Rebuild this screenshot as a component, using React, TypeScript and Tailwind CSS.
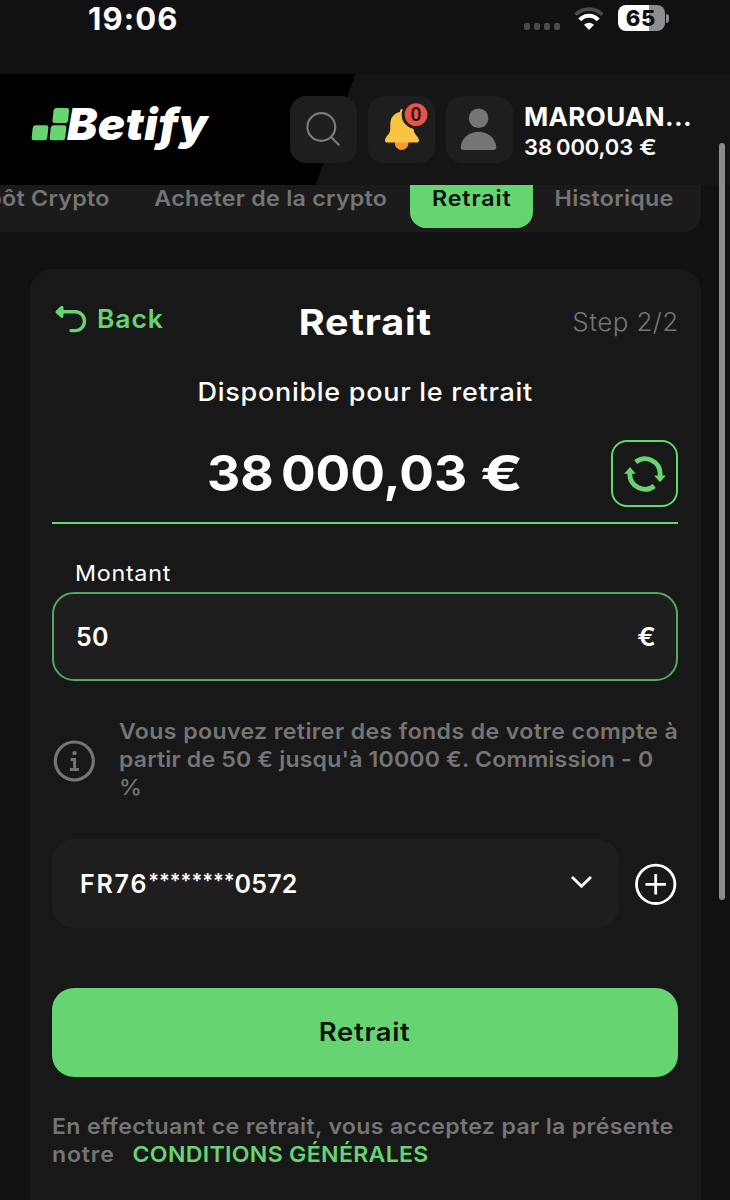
import React, { useState } from 'react';

const tabs = [
    { label: 'Dépôt Crypto', width: 'w-[195px]' },
    { label: 'Acheter de la crypto', width: 'w-[279px]' },
    { label: 'Retrait', width: 'w-[123px]' },
    { label: 'Historique', width: 'w-[162px]' },
];

function StatusBar() {
    return (
        <div className="h-[74px] flex items-start justify-between pl-[88px] pr-[61px]">
            <span className="text-[31px] font-bold leading-[38px] tracking-[1.1px]">19:06</span>
            <div className="flex items-start pt-[5px]">
                <div className="flex gap-[3.5px] mt-[18px] mr-[14px]">
                    {[0, 1, 2, 3].map((i) => (
                        <span key={i} className="w-[6.5px] h-[7px] rounded-[2px] bg-[#4a4a4c]" />
                    ))}
                </div>
                <svg className="mt-[1px] mr-[14px]" width="30" height="25" viewBox="0 0 30 25" fill="none">
                    <path d="M1.6 8.6A19 19 0 0 1 28.4 8.6" stroke="#4a4a4c" strokeWidth="3.8" />
                    <path d="M5.8 13.8A12.5 12.5 0 0 1 24.2 13.8" stroke="#fff" strokeWidth="4.2" />
                    <path d="M10 18.7Q15 14.6 20 18.7L15 24z" fill="#fff" />
                </svg>
                <div className="flex items-center gap-[1px]">
                    <div className="w-[47px] h-[26px] rounded-[8px] flex items-center justify-center bg-linear-to-r from-white from-66% to-[#8e8e90] to-66%">
                        <span className="text-[22px] font-extrabold leading-none tracking-[0.8px] text-[#111113] -ml-[1px]">65</span>
                    </div>
                    <span className="w-[3px] h-[9px] rounded-r-full bg-[#8e8e90]" />
                </div>
            </div>
        </div>
    );
}

function Logo() {
    return (
        <div className="flex items-start pt-[1px]">
            <svg className="mt-[11px]" width="39" height="33" viewBox="0 0 39 33" fill="#66d570">
                <rect x="21.8" y="0" width="15.6" height="15" rx="2.5" transform="translate(1 0) skewX(-6)" />
                <rect x="2.8" y="17.3" width="15.6" height="15" rx="2.5" transform="translate(1 0) skewX(-6)" />
                <rect x="20.8" y="17.3" width="15.6" height="15" rx="2.5" transform="translate(1 0) skewX(-6)" />
            </svg>
            <span className="text-[44px] font-black italic leading-[55px] tracking-[0.5px] -ml-[3px] origin-left scale-x-103">Betify</span>
        </div>
    );
}

function Header() {
    return (
        <header className="relative h-[111px] bg-[#151515]">
            <div className="absolute inset-0 bg-black [clip-path:polygon(0_0,355.5px_0,315.5px_100%,0_100%)]" />
            <div className="relative flex items-start justify-between pt-[22px] pl-[31px] pr-[37px]">
                <Logo />
                <div className="flex items-start gap-[11px]">
                    <button className="w-[67px] h-[67px] rounded-2xl bg-[#1e1e1e]">
                        <svg width="67" height="67" viewBox="0 0 67 67" fill="none" stroke="#7a7a7a" strokeWidth="2.2">
                            <circle cx="31.3" cy="31" r="13.9" />
                            <path d="M41 41l8.3 8.3" />
                        </svg>
                    </button>
                    <button className="relative w-[67px] h-[67px] rounded-2xl bg-[#1e1e1e]">
                        <svg width="67" height="67" viewBox="0 0 67 67">
                            <circle cx="33.6" cy="47.2" r="6.8" fill="#f39b30" />
                            <path
                                d="M34 13c1.2 0 1.6 1 1.6 3C42 17 45.5 22 45.5 28v5c0 5 5.5 8 5.5 11.2 0 1.6-.8 2.3-2.3 2.3H19.3c-1.5 0-2.3-.7-2.3-2.3C17 41 22.3 38 22.3 33v-5c0-6 3.5-11 9.7-12 0-2 .8-3 2-3z"
                                fill="#f8c441"
                            />
                            <circle cx="48" cy="18.7" r="14.3" fill="#1e1e1e" />
                            <circle cx="48" cy="18.7" r="11.4" fill="#e85345" />
                        </svg>
                        <span className="absolute left-[37px] top-[7px] w-[22px] text-center font-['Open_Sans'] text-[19px] leading-[23px] font-semibold text-[#151515]">0</span>
                    </button>
                    <button className="w-[67px] h-[67px] rounded-2xl bg-[#1e1e1e]">
                        <svg width="67" height="67" viewBox="0 0 67 67" fill="#757575">
                            <circle cx="32.6" cy="22.3" r="9.8" />
                            <path d="M14.7 51C15.4 42.2 23 35.7 32.5 35.7S49.6 42.2 50.3 51c0 2-.9 3-2.6 3H17.3c-1.7 0-2.6-1-2.6-3z" />
                        </svg>
                    </button>
                    <div className="w-[169px] pt-[6px] whitespace-nowrap">
                        <p className="text-[26px] font-bold leading-[29px] tracking-[0.35px]">MAROUAN...</p>
                        <p className="text-[22px] font-semibold leading-[32px] flex">
                            <span>38</span>
                            <span className="ml-[4px] -tracking-[0.15px]">000,03</span>
                            <span className="ml-[6px] origin-left scale-x-120">€</span>
                        </p>
                    </div>
                </div>
            </div>
        </header>
    );
}

function Tabs() {
    const [active, setActive] = useState('Retrait');

    return (
        <nav className="h-[47px] w-[701px] overflow-hidden rounded-br-[18px] bg-[#1b1b1b] flex items-end justify-end pr-[6px] pb-1">
            {tabs.map(({ label, width }) => (
                <button
                    key={label}
                    onClick={() => setActive(label)}
                    className={`${width} shrink-0 h-[66px] pt-[6px] rounded-2xl text-[21.5px] font-semibold whitespace-nowrap ${
                        active === label ? 'bg-[#66d571] text-[#0c130d] tracking-[0.8px]' : 'text-[#757575] tracking-[0.25px]'
                    }`}
                >
                    <span className="inline-block scale-x-108">{label}</span>
                </button>
            ))}
        </nav>
    );
}

function WithdrawCard() {
    const [amount, setAmount] = useState('50');

    return (
        <main className="mt-[37px] ml-[30px] w-[671px] h-[931px] rounded-t-[22px] bg-[#181818] pt-8 px-[22px]">
            <div className="w-[626px]">
                <div className="h-10 grid grid-cols-3 items-center">
                    <button className="flex items-center text-[#66d571] mb-[7px] pl-[2px]">
                        <svg width="34" height="30" viewBox="0 0 34 30" fill="none" stroke="currentColor" strokeWidth="3.4" strokeLinecap="round" strokeLinejoin="round">
                            <path d="M4 7.8H21.1a9.4 9.4 0 0 1 0 18.8H17" />
                            <path d="M7.8 3.5L3.2 7.9l4.6 4.2z" fill="currentColor" />
                        </svg>
                        <span className="ml-[9px] text-[25px] font-semibold leading-[30px] tracking-[0.8px] origin-left scale-x-106">Back</span>
                    </button>
                    <h1 className="text-center text-[36px] font-bold leading-10 tracking-[0.75px] scale-x-110">Retrait</h1>
                    <span className="text-right text-[25px] font-light leading-[42px] tracking-[0.4px] -mr-[1px] origin-right scale-x-104 text-[#757575]">Step 2/2</span>
                </div>

                <p className="mt-[38px] text-center text-[25px] font-medium leading-[26px] tracking-[0.66px]">
                    <span className="inline-block scale-x-108">Disponible pour le retrait</span>
                </p>

                <div className="mt-[35px] grid grid-cols-[67px_1fr_67px] items-center">
                    <p className="col-start-2 flex justify-center pb-[1px] text-[50px] font-bold leading-[60px] scale-x-103">
                        <span>38</span>
                        <span className="ml-[7px]">000,03</span>
                        <span className="ml-[13px] mr-[7px] origin-left scale-x-122">€</span>
                    </p>
                    <button className="w-[67px] h-[67px] rounded-2xl border-2 border-[#66d571] flex items-center justify-center">
                        <svg width="42" height="36" viewBox="0 0 42 36" fill="none" stroke="#66d571" strokeWidth="4.8">
                            <path d="M11.7 6A15.2 15.2 0 0 1 36.2 18V20" />
                            <path d="M30.3 30A15.2 15.2 0 0 1 5.8 18V17" />
                            <path d="M30.2 19.5H41.8L36 26.3zM.2 17.8H11.8L6 11z" fill="#66d571" stroke="none" />
                        </svg>
                    </button>
                </div>
                <div className="mt-[15px] h-[2px] bg-[#66d571]" />

                <label className="block mt-[35px] pl-[23px] text-[22px] leading-7 tracking-[0.66px]">
                    <span className="inline-block origin-left scale-x-106">Montant</span>
                </label>
                <div className="mt-[5px] h-[89px] rounded-[22px] border-2 border-[#52a85b] bg-[#1e1e1e] flex items-center justify-between pt-[3px] pl-[22px] pr-[20px] text-[25px] font-semibold">
                    <input
                        value={amount}
                        onChange={(e) => setAmount(e.target.value)}
                        className="w-60 bg-transparent tracking-[0.3px] focus:outline-none"
                    />
                    <span className="origin-right scale-x-110">€</span>
                </div>

                <div className="mt-[36px] flex items-center text-[#757575]">
                    <svg className="mt-[3px] ml-[1px] shrink-0" width="42" height="42" viewBox="0 0 42 42" fill="none" stroke="currentColor" strokeWidth="3.2">
                        <circle cx="21.3" cy="21" r="19" />
                        <path d="M17.6 19.5H21.6V29M16.9 29.4H25.9" strokeWidth="3" />
                        <rect x="19.5" y="11.3" width="4" height="3.8" rx="1" fill="currentColor" stroke="none" />
                    </svg>
                    <p className="ml-[24px] origin-left scale-x-105 text-[22px] font-semibold leading-7 tracking-[0.37px] whitespace-nowrap">
                        Vous pouvez retirer des fonds de votre compte à
                        <br />
                        <span className="tracking-[0.16px]">partir de 50 € jusqu'à 10000 €. Commission - 0</span>
                        <br />
                        <span className="font-medium">%</span>
                    </p>
                </div>

                <div className="mt-[38px] flex items-center gap-[16px]">
                    <button className="w-[567px] h-[89px] rounded-[22px] bg-[#1e1e1e] flex items-center justify-between pl-[28px] pr-[26px]">
                        <span className="flex pt-[3px] text-[25px] font-semibold">
                            <span className="tracking-[1.8px]">FR76</span>
                            <span className="text-[20px]">********</span>
                            <span className="tracking-[0.2px]">0572</span>
                        </span>
                        <svg className="-mt-[3px]" width="23" height="14" viewBox="0 0 23 14" fill="none" stroke="#fff" strokeWidth="2.8">
                            <path d="M2 2L11.5 11.3L21 2" />
                        </svg>
                    </button>
                    <svg width="42" height="42" viewBox="0 0 42 42" fill="none" stroke="#fff" strokeWidth="2.8">
                        <circle cx="20.7" cy="21.3" r="19.2" />
                        <path d="M20.7 11.1V31.5M10.5 21.3H30.9" />
                    </svg>
                </div>

                <button className="mt-[60px] w-full h-[89px] rounded-[22px] bg-[#66d571] pt-[1px] text-[25px] font-semibold tracking-[0.6px] text-[#0c130d]">
                    <span className="inline-block scale-x-110">Retrait</span>
                </button>

                <p className="mt-[35px] origin-left scale-x-105 text-[22px] font-semibold leading-7 tracking-[0.33px] text-[#757575] whitespace-nowrap">
                    En effectuant ce retrait, vous acceptez par la présente
                    <br />
                    <span className="tracking-[0.75px]">notre</span>
                    <a className="ml-[17px] tracking-[0.3px] text-[#66d571]">CONDITIONS GÉNÉRALES</a>
                </p>
            </div>
        </main>
    );
}

export default function App() {
    return (
        <div className="relative w-[730px] h-[1200px] overflow-hidden bg-[#111113] font-[Inter,sans-serif] text-white">
            <StatusBar />
            <Header />
            <Tabs />
            <WithdrawCard />
            <div className="absolute right-[5px] top-[143px] w-[6px] h-[757px] rounded-full bg-[#8b8b8d]" />
        </div>
    );
}
